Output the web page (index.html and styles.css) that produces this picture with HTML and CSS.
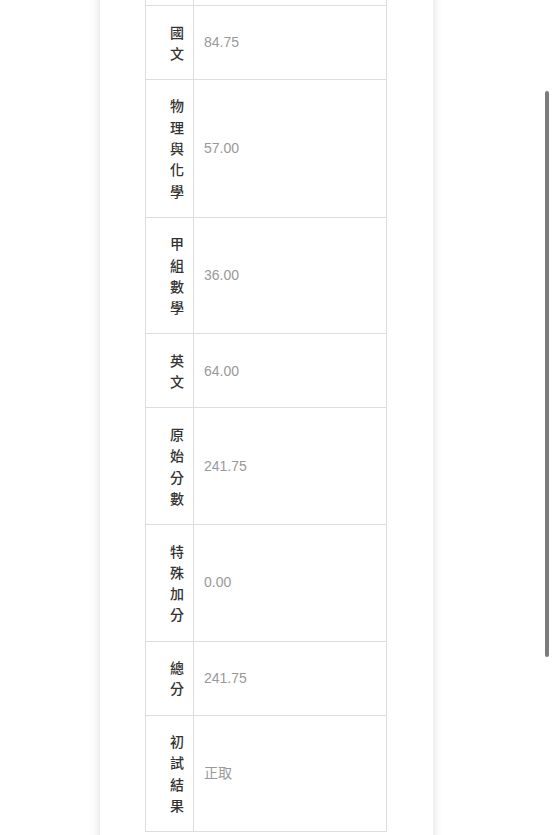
FILE: index.html
```html
<!DOCTYPE html>
<html lang="zh-Hant">
<head>
<meta charset="utf-8">
<title>成績</title>
<link rel="stylesheet" href="styles.css">
</head>
<body>
<div class="card">
  <table class="scores">
    <colgroup><col class="c-label"><col class="c-value"></colgroup>
    <tr class="row-prev"><th></th><td></td></tr>
    <tr><th>國文</th><td>84.75</td></tr>
    <tr><th>物理與化學</th><td>57.00</td></tr>
    <tr><th>甲組數學</th><td>36.00</td></tr>
    <tr><th>英文</th><td>64.00</td></tr>
    <tr><th>原始分數</th><td>241.75</td></tr>
    <tr><th>特殊加分</th><td>0.00</td></tr>
    <tr><th>總分</th><td>241.75</td></tr>
    <tr><th>初試結果</th><td>正取</td></tr>
  </table>
</div>
<div class="scrollbar"></div>
</body>
</html>
```
FILE: styles.css
```css
html {
  scrollbar-width: none;
  background: #ffffff;
}
html::-webkit-scrollbar { display: none; }
body {
  margin: 0;
  font-family: "Liberation Sans", "Noto Sans CJK TC", sans-serif;
  font-size: 14px;
  background: #ffffff;
}
.card {
  margin-top: -60px;
  margin-left: 100px;
  width: 333px;
  box-sizing: border-box;
  padding: 0 47px 60px 45px;
  background: #ffffff;
  box-shadow: 0 0 10px rgba(0, 0, 0, 0.14);
}
.scores {
  border-collapse: collapse;
  table-layout: fixed;
  width: 242px;
}
.c-label { width: 48px; }
.scores th,
.scores td {
  border: 1px solid #dddddd;
  line-height: 21.3px;
  padding-top: 15.5px;
  padding-bottom: 14.9px;
  vertical-align: middle;
}
.scores th {
  padding-left: 24px;
  padding-right: 10px;
  text-align: left;
  font-family: "Noto Sans CJK TC", sans-serif;
  font-weight: 500;
  color: #333333;
  word-break: break-all;
}
.scores td {
  padding-left: 10px;
  padding-right: 10px;
  color: #999999;
}
.scores .row-prev th,
.scores .row-prev td {
  padding: 0;
  height: 64px;
}
.scrollbar {
  position: fixed;
  left: 545px;
  top: 91px;
  width: 4px;
  height: 566px;
  border-radius: 2px;
  background: #7c7c7c;
}
```
